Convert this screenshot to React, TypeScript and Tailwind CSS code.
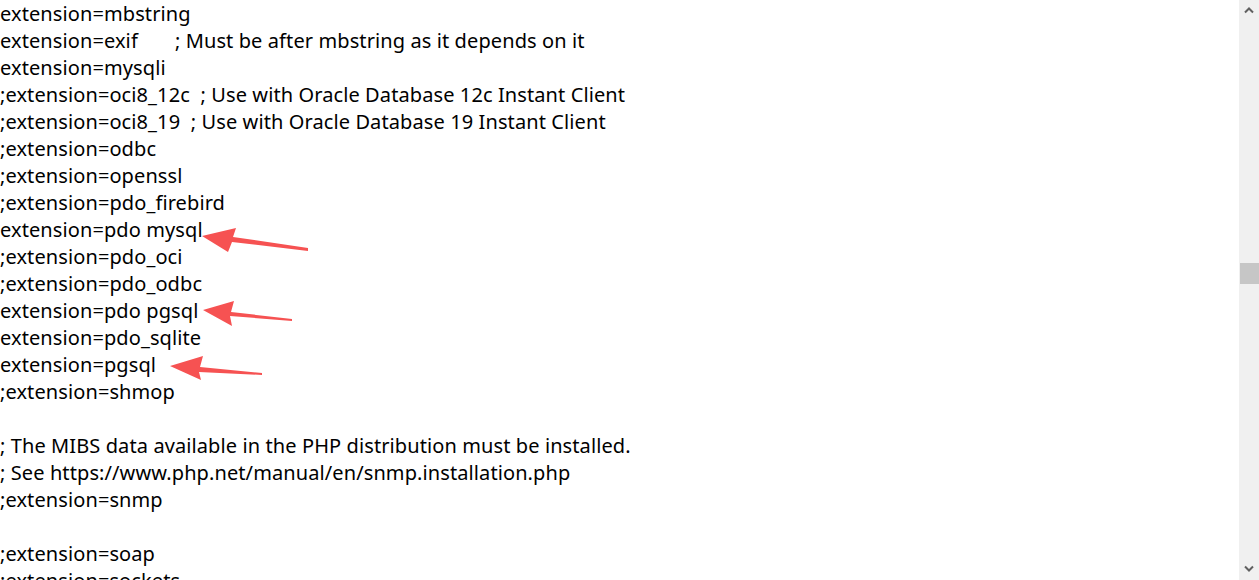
const lines = [
  "extension=mbstring",
  "extension=exif       ; Must be after mbstring as it depends on it",
  "extension=mysqli",
  ";extension=oci8_12c  ; Use with Oracle Database 12c Instant Client",
  ";extension=oci8_19  ; Use with Oracle Database 19 Instant Client",
  ";extension=odbc",
  ";extension=openssl",
  ";extension=pdo_firebird",
  "extension=pdo mysql",
  ";extension=pdo_oci",
  ";extension=pdo_odbc",
  "extension=pdo pgsql",
  "extension=pdo_sqlite",
  "extension=pgsql",
  ";extension=shmop",
  "",
  "; The MIBS data available in the PHP distribution must be installed.",
  "; See https://www.php.net/manual/en/snmp.installation.php",
  ";extension=snmp",
  "",
  ";extension=soap",
  ";extension=sockets",
];

// red callout arrow: tip, two wings, tapering tail
function Arrow({ points }: { points: string }) {
  return <polygon points={points} fill="#f65252" />;
}

function Scrollbar() {
  return (
    <div className="flex h-[580px] w-[20px] shrink-0 flex-col items-center bg-[#f0f0f0]">
      <svg className="mt-[6px]" width="10" height="8" viewBox="0 0 10 8">
        <path d="M1 6.5 L5 2.5 L9 6.5" fill="none" stroke="#606060" strokeWidth="2" />
      </svg>
      <div className="mt-[249px] h-[21px] w-[19px] bg-[#c6c6c6]" />
      <div className="flex-1" />
      <svg className="mb-[7px]" width="10" height="8" viewBox="0 0 10 8">
        <path d="M1 1.5 L5 5.5 L9 1.5" fill="none" stroke="#606060" strokeWidth="2" />
      </svg>
    </div>
  );
}

export default function App() {
  return (
    <div className="flex h-[580px] w-[1259px] overflow-hidden bg-white">
      <div className="relative flex-1 overflow-hidden">
        <div className="font-['Noto_Sans',sans-serif] text-[20px] leading-[27px] tracking-[0.1px] whitespace-pre text-black">
          {lines.map((line, i) => (
            <div key={i} className="h-[27px]">
              {line}
            </div>
          ))}
        </div>

        <svg className="pointer-events-none absolute left-0 top-0" width="1239" height="580">
          <Arrow points="202,236 236,228 233,237 308,248 308,251 232,242 228,252" />
          <Arrow points="203,310 234,301 231,312 292,319 292,321 230,316 232,326" />
          <Arrow points="170,366 203,356 200,367 262,373 262,375 199,372 201,380" />
        </svg>
      </div>
      <Scrollbar />
    </div>
  );
}
